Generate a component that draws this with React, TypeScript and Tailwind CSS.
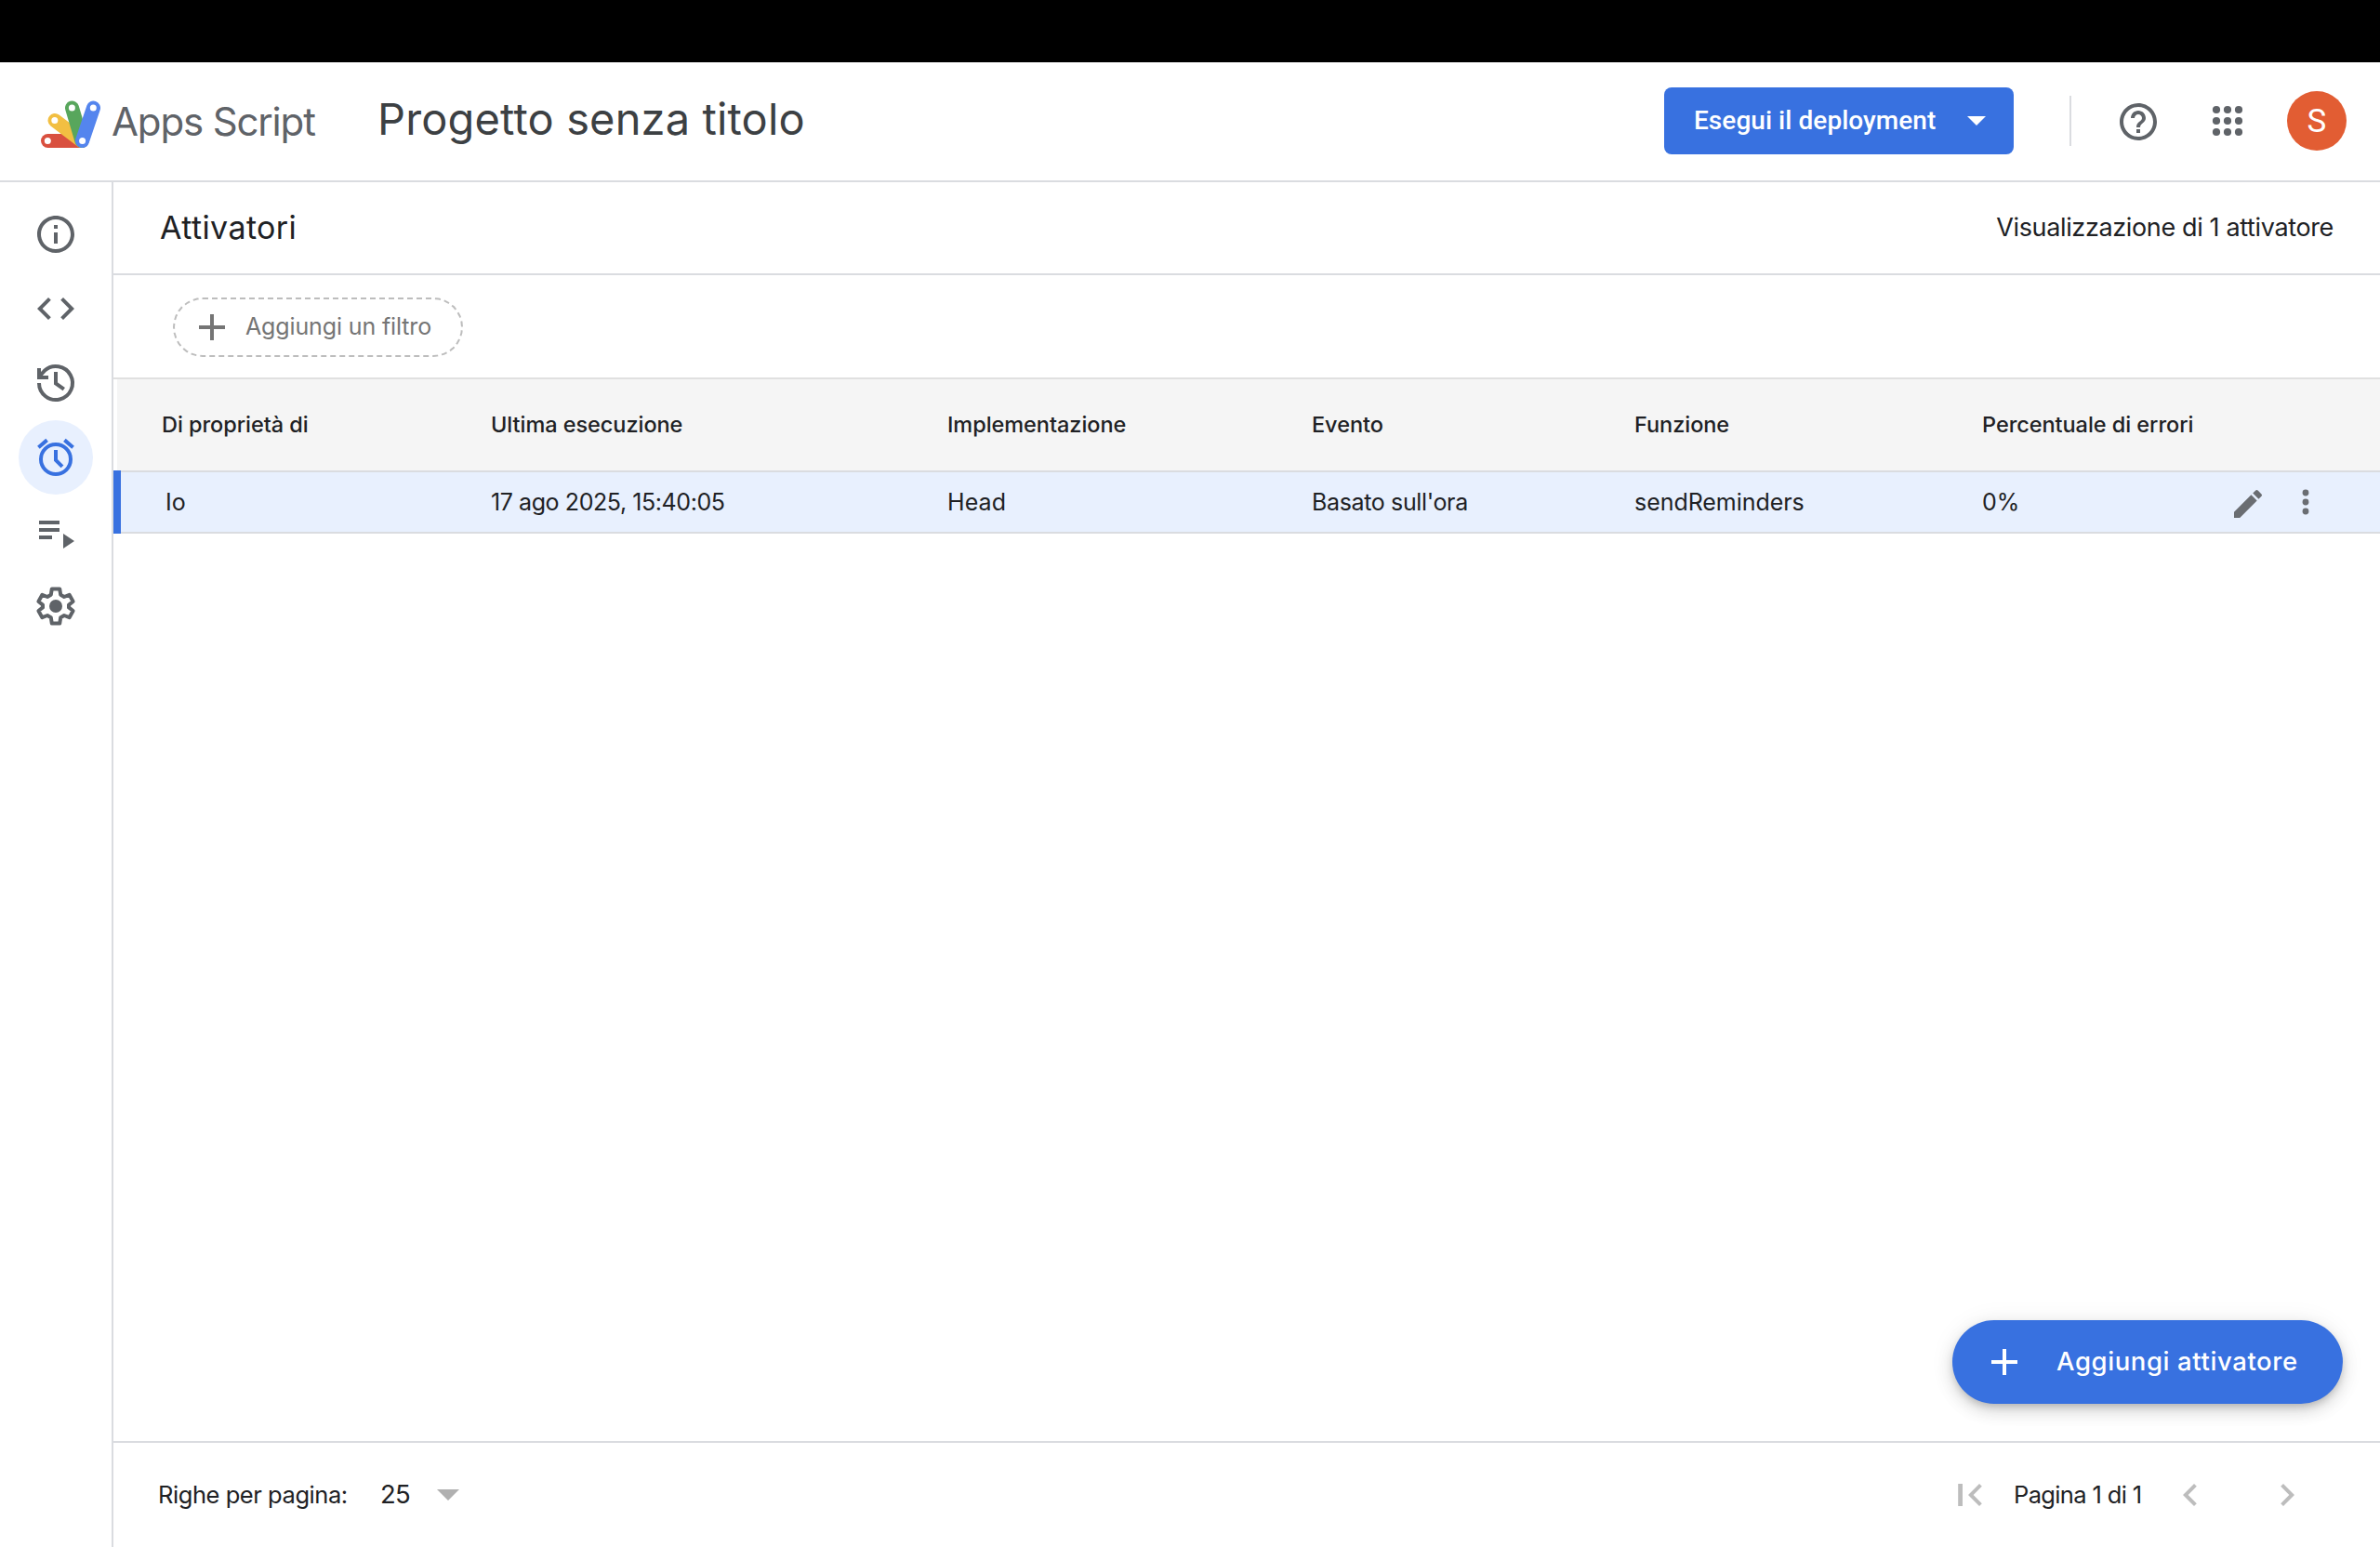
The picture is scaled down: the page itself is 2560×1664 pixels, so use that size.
import type { ReactNode } from 'react';

function Icon({ children, className = 'size-12' }: { children: ReactNode; className?: string }) {
  return (
    <svg viewBox="0 0 24 24" fill="currentColor" className={`${className} shrink-0`}>
      {children}
    </svg>
  );
}

function AppsScriptLogo() {
  return (
    <svg viewBox="0 0 66 52" className="h-[52px] w-[66px] shrink-0" strokeWidth="15" strokeLinecap="round">
      <path d="M8.5 43.5H45" stroke="#d9503f" />
      <path d="M16 21.5L45 43.5" stroke="#f2bf42" />
      <path d="M34.5 8L45 43.5" stroke="#58a65c" />
      <path d="M57.5 8L45.5 43.5" stroke="#5485ee" />
      <g fill="#fff">
        <circle cx="8.3" cy="43.5" r="3.5" />
        <circle cx="15.8" cy="21.6" r="3.5" />
        <circle cx="34.4" cy="8" r="3.5" />
        <circle cx="57.3" cy="8" r="3.5" />
        <circle cx="45.6" cy="43.5" r="3.5" />
      </g>
    </svg>
  );
}

const navItems = [
  {
    id: 'info',
    icon: <path d="M11 7h2v2h-2zm0 4h2v6h-2zm1-9C6.48 2 2 6.48 2 12s4.48 10 10 10 10-4.48 10-10S17.52 2 12 2zm0 18c-4.41 0-8-3.59-8-8s3.59-8 8-8 8 3.59 8 8-3.59 8-8 8z" />,
  },
  {
    id: 'editor',
    icon: <path d="M9.4 16.6L4.8 12l4.6-4.6L8 6l-6 6 6 6 1.4-1.4zm5.2 0l4.6-4.6-4.6-4.6L16 6l6 6-6 6-1.4-1.4z" />,
  },
  {
    id: 'history',
    icon: (
      <g fill="none" stroke="currentColor" strokeWidth="2">
        <path d="M3 12a9 9 0 1 0 2.9-6.6L3 8.6" />
        <path d="M3 4v5h5" />
        <path d="M12 6v6.2l4.4 3.1" />
      </g>
    ),
  },
  {
    id: 'triggers',
    active: true,
    icon: (
      <g fill="none" stroke="currentColor" strokeWidth="2">
        <circle cx="12" cy="13" r="8" />
        <path d="M12 8v5.4l3.500 3.500M7.300 2.700L2.700 6.600M16.700 2.700l4.600 3.900" />
      </g>
    ),
  },
  {
    id: 'executions',
    icon: <path d="M3 6h11v2H3zM3 10h11v2H3zM3 14h7v2H3zM16 13v8l6-4z" />,
  },
  {
    id: 'settings',
    icon: (
      <>
        <path
          fill="none"
          stroke="currentColor"
          strokeWidth="2"
          strokeLinejoin="round"
          d="M9.9 2.700h4.200l.5 3.200 1.900 1.100 2.800-1.100 2 3.600-2.300 1.800v1.400l2.300 1.800-2 3.600-2.800-1.100-1.900 1.100-.5 3.200H9.900l-.5-3.200L7.500 17l-2.800 1.100-2-3.600 2.300-1.800v-1.400L2.700 9.500l2-3.600L7.500 7l1.900-1.100z"
        />
        <circle cx="12" cy="12" r="3.5" />
      </>
    ),
  },
];

const grid = 'grid grid-cols-[354px_491px_392px_347px_374px_1fr] items-center';
const headings = ['Di proprietà di', 'Ultima esecuzione', 'Implementazione', 'Evento', 'Funzione', 'Percentuale di errori'];
const dots = [6, 12, 18];

export default function App() {
  return (
    <div className="flex h-[1664px] w-[2560px] flex-col overflow-hidden bg-white font-['Inter',sans-serif] whitespace-nowrap text-[#202124]">
      <div className="h-[67px] shrink-0 bg-black" />

      <header className="flex h-[129px] shrink-0 items-center border-b-2 border-[#dadce0] pr-9 pl-[43px]">
        <div className="flex items-center pt-1.5">
          <AppsScriptLogo />
        </div>
        <span className="ml-[11px] w-[286px] text-[42px] tracking-[-1.15px] text-[#5f6368]">Apps Script</span>
        <h1 className="pb-[5px] text-[47px] tracking-[0.14px] text-[#3c4043]">Progetto senza titolo</h1>

        <div className="ml-auto flex items-center pr-0.5 pb-px">
          <button className="flex h-[72px] w-[376px] items-center rounded-lg bg-[#3871e0] pl-8 text-white">
            <span className="pb-px font-['Roboto',sans-serif] text-[28px] font-medium tracking-[0.05px]">Esegui il deployment</span>
            <svg viewBox="0 0 20 10" className="ml-[34px] h-2.5 w-5" fill="currentColor">
              <path d="M0 0h20L10 10z" />
            </svg>
          </button>
          <div className="ml-[60px] h-[54px] w-0.5 bg-[#dadce0]" />
          <div className="ml-12 flex items-center gap-12 text-[#5f6368]">
            <Icon className="mt-0.5 size-12">
              <path d="M11 18h2v-2h-2v2zm1-16C6.48 2 2 6.48 2 12s4.48 10 10 10 10-4.48 10-10S17.52 2 12 2zm0 18c-4.41 0-8-3.59-8-8s3.59-8 8-8 8 3.59 8 8-3.59 8-8 8zm0-14c-2.21 0-4 1.79-4 4h2c0-1.1.9-2 2-2s2 .9 2 2c0 2-3 1.75-3 5h2c0-2.25 3-2.500 3-5 0-2.210-1.790-4-4-4z" />
            </Icon>
            <Icon>
              {dots.map((y) => dots.map((x) => <circle key={`${x}-${y}`} cx={x} cy={y} r="2.05" />))}
            </Icon>
          </div>
          <div className="ml-10 -mr-0.5 flex size-16 items-center justify-center rounded-full bg-[#e25d33] pt-0.5 font-['Roboto',sans-serif] text-[35px] text-white">S</div>
        </div>
      </header>

      <div className="flex min-h-0 flex-1">
        <nav className="flex w-[122px] shrink-0 flex-col items-center border-r-2 border-[#dadce0] pt-4">
          {navItems.map((item) => (
            <a
              key={item.id}
              className={
                item.active
                  ? 'flex size-20 items-center justify-center rounded-full bg-[#e8f0fe] text-[#3871e0]'
                  : 'flex size-20 items-center justify-center rounded-full text-[#5f6368]'
              }
            >
              <Icon>{item.icon}</Icon>
            </a>
          ))}
        </nav>

        <main className="relative flex min-w-0 flex-1 flex-col">
          <div className="flex h-[100px] shrink-0 items-center justify-between border-b-2 border-[#dadce0] pr-[50px] pl-[50px]">
            <h2 className="pb-0.5 text-[34px] tracking-[0.4px]">Attivatori</h2>
            <span className="text-[27px] tracking-[-0.36px]">Visualizzazione di 1 attivatore</span>
          </div>

          <div className="flex h-28 shrink-0 items-center border-b-2 border-[#e0e0e0] pt-0.5 pl-16">
            <button className="flex h-16 w-[312px] items-center rounded-full border-2 border-dashed border-[#bdbdbd] pl-4 text-[#757575]">
              <Icon>
                <path d="M19 13h-6v6h-2v-6H5v-2h6V5h2v6h6z" />
              </Icon>
              <span className="ml-3 text-[25px] tracking-[-0.13px]">Aggiungi un filtro</span>
            </button>
          </div>

          <div className="h-[100px] shrink-0 border-b-2 border-[#dadce0] pl-1">
            <div className={`${grid} h-full bg-[#f5f5f5] pl-12 text-[23.5px] font-medium tracking-[-0.05px]`}>
              {headings.map((h) => (
                <span key={h}>{h}</span>
              ))}
            </div>
          </div>

          <div className="-mt-0.5 flex h-[68px] shrink-0">
            <div className="w-2 shrink-0 bg-[#3871e0]" />
            <div className={`${grid} flex-1 border-y-2 border-[#dadce0] bg-[#e8f0fe] pl-11 text-[25px]`}>
              <span className="pt-0.5 pl-1">Io</span>
              <span className="pt-0.5 tracking-[-0.42px]">17 ago 2025, 15:40:05</span>
              <span className="pt-0.5 tracking-[0.1px]">Head</span>
              <span className="pt-0.5 tracking-[-0.36px]">Basato sull'ora</span>
              <span className="pt-0.5 tracking-[-0.05px]">sendReminders</span>
              <div className="flex items-center justify-between pr-[60px]">
                <span className="pt-0.5">0%</span>
                <div className="flex items-center gap-[22px] text-[#6a6d72]">
                  <Icon className="mt-1 size-10">
                    <path d="M3 17.25V21h3.75L17.81 9.94l-3.75-3.75L3 17.25zM20.71 7.04a1 1 0 0 0 0-1.41l-2.34-2.34a1 1 0 0 0-1.41 0l-1.83 1.83 3.75 3.75 1.83-1.83z" />
                  </Icon>
                  <Icon className="size-10">
                    {dots.map((y) => (
                      <circle key={y} cx="12" cy={y} r="2.05" />
                    ))}
                  </Icon>
                </div>
              </div>
            </div>
          </div>

          <div className="flex-1" />

          <button className="absolute right-10 bottom-[154px] flex h-[90px] w-[420px] items-center rounded-full bg-[#3871e0] pl-8 text-white shadow-[0_4px_8px_-2px_rgba(0,0,0,0.2),0_8px_18px_rgba(0,0,0,0.13),0_2px_28px_rgba(0,0,0,0.07)]">
            <Icon>
              <path d="M19 13h-6v6h-2v-6H5v-2h6V5h2v6h6z" />
            </Icon>
            <span className="ml-8 pb-px text-[27.5px] font-medium tracking-[0.6px]">Aggiungi attivatore</span>
          </button>

          <footer className="flex h-[114px] shrink-0 items-center border-t-2 border-[#dadce0] pl-12 text-[25.5px]">
            <span className="w-[239px] tracking-[-0.45px]">Righe per pagina:</span>
            <span className="w-[61px] text-[27.5px] tracking-[-0.8px]">25</span>
            <svg viewBox="0 0 24 12" className="h-3 w-6" fill="#b0b0b0">
              <path d="M0 0h24L12 12z" />
            </svg>
            <div className="ml-auto flex items-center pr-[76px] text-[#bdbdbd]">
              <Icon>
                <path d="M18.41 16.59L13.82 12l4.59-4.59L17 6l-6 6 6 6zM5.6 6h2.4v12h-2.400z" />
              </Icon>
              <span className="ml-[23px] w-[166px] tracking-[-0.65px] text-[#202124]">Pagina 1 di 1</span>
              <Icon>
                <path d="M15.41 7.41L14 6l-6 6 6 6 1.41-1.41L10.83 12z" />
              </Icon>
              <Icon className="ml-14 size-12">
                <path d="M10 6L8.59 7.41 13.17 12l-4.58 4.59L10 18l6-6z" />
              </Icon>
            </div>
          </footer>
        </main>
      </div>
    </div>
  );
}
